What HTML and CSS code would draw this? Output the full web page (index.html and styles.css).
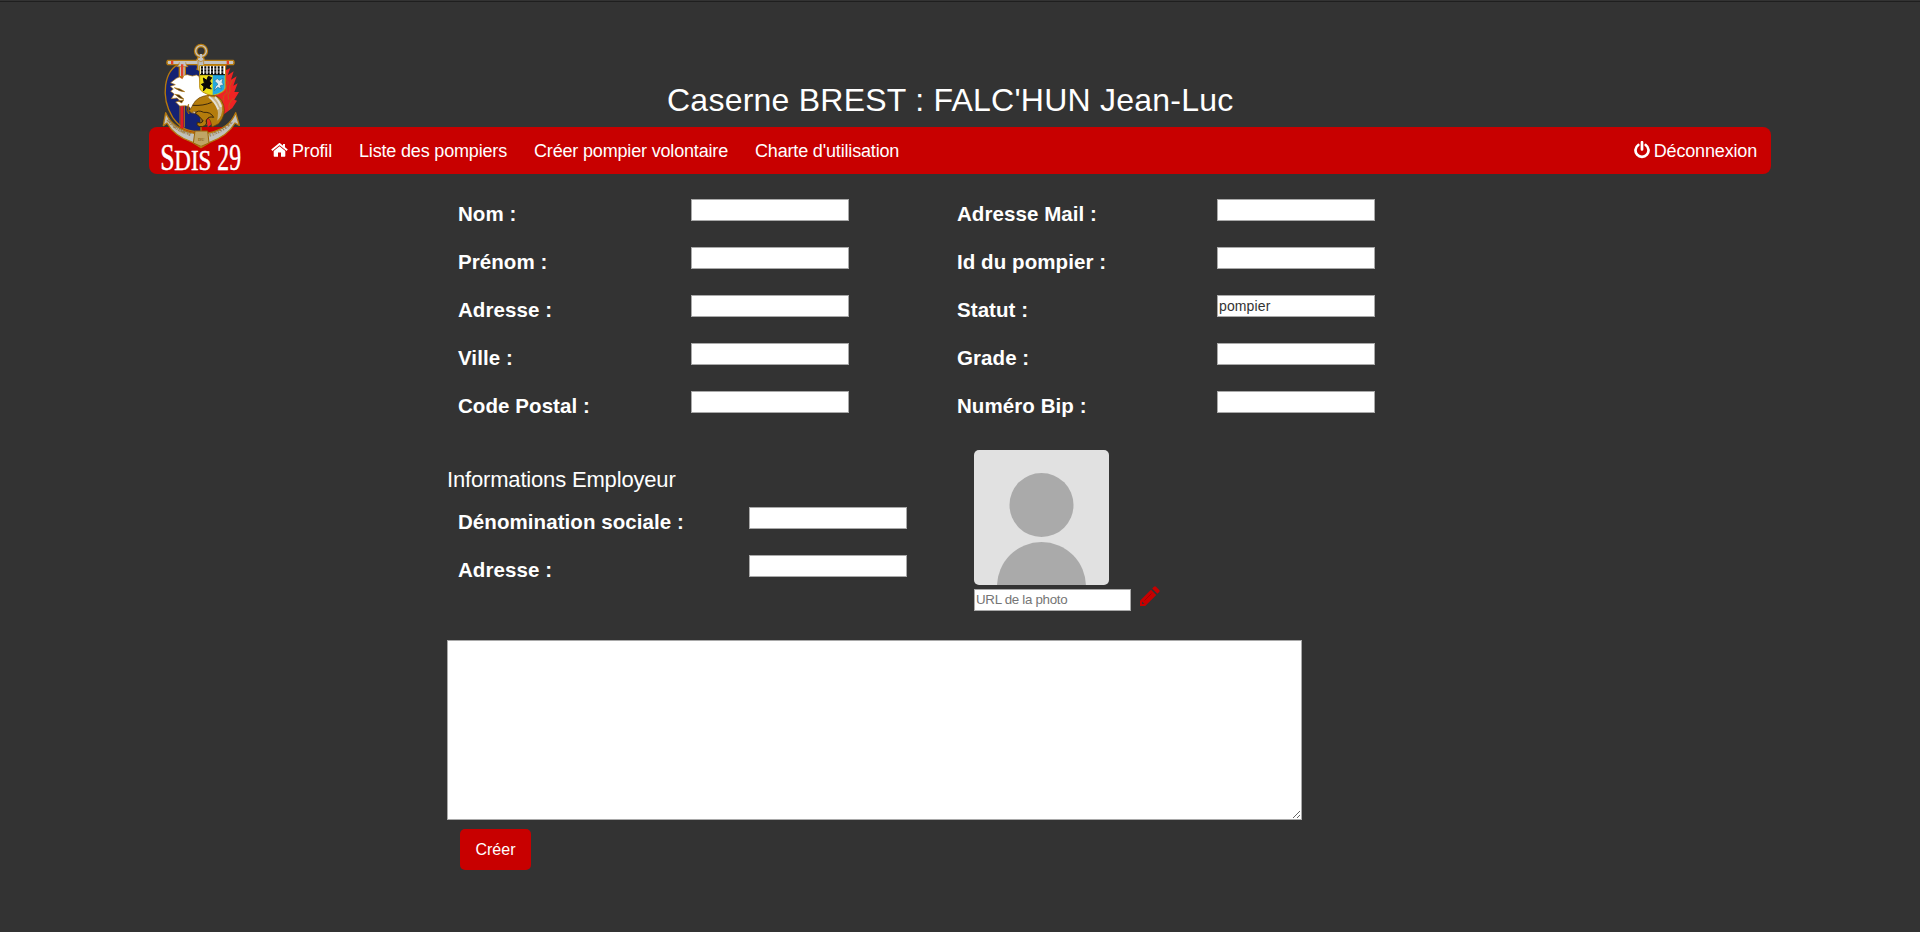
FILE: index.html
```html
<!DOCTYPE html>
<html lang="fr">
<head>
<meta charset="utf-8">
<title>SDIS 29</title>
<link rel="stylesheet" href="styles.css">
</head>
<body>
<header class="header">
  <h1 class="title">Caserne BREST : FALC'HUN Jean-Luc</h1>
  <nav class="nav">
    <svg class="logo" viewBox="60 39 243 390" role="img" aria-label="SDIS 29">
      <g stroke-linejoin="round">
        <path d="M121 100C72 120 60 200 98 262C125 300 145 304 183 306L183 100Z" fill="#142273" stroke="#b5790d" stroke-width="4"/>
        <path d="M120 112v180M133 112v180" stroke="#b5790d" stroke-width="3"/>
        <path d="M126 106v188" stroke="#e21b22" stroke-width="9"/>
        <path d="M184 105l10-11 5 10 12-11 5 12 12-9 5 11 12-13 3 14 12-7-3 20 14-7-8 22 18-12-8 25 17-10-10 28 13-7-10 26 14 0-14 23 8 3-14 22-24 18-50 40Z" fill="#ee2323"/>
        <path d="M259 130q-7 22 7 27q-13 15-4 32q-16 5-11 25M277 150q-12 18-7 34q-10 12-4 25M246 207q-8 17 4 27M280 205q-18 16-12 35M200 285l9-19 6 12 16-22" fill="none" stroke="#c15a16" stroke-width="3"/>
        <path d="M83 91q-5 7 0 13h35v36h18v-36h35q5 9 0 14q12-4 23 0q-5-7 0-14h86q5-6 0-13h-84q-5 0-6-15h-16q0 15-7 15Z" fill="#c3c3c3" stroke="#b5790d" stroke-width="4"/>
        <path d="M118 97q0 9-8 13h34q-7-4-7-13" fill="#c4c4c4" stroke="#b5790d" stroke-width="2"/>
        <path d="M93 92h7v11h-7ZM260 92h7v11h-7ZM123 103h7v35h-7Z" fill="#e2422b"/>
        <path d="M174 91q9 8 17 0v30h-17Z" fill="#bdbdbd" stroke="#b5790d" stroke-width="2"/>
        <circle cx="183" cy="63" r="16" fill="none" stroke="#b5790d" stroke-width="11"/>
        <circle cx="183" cy="63" r="16" fill="none" stroke="#c3c3c3" stroke-width="4"/>
        <path d="M180 72h6v18h-6Z" fill="#c3c3c3"/>
        <path d="M92 158l17-13 9-4 9 5 5-10 10-2 15 4 12-3 8 4 4 20 15 18 8 18-13 20-20 12-5 23-12-2-4-16-13-5-18 1-12-12 14-3-10-9-17 2 9-14-11-8 8-7-9-8 15-5Z" fill="#fff" stroke="#b5790d" stroke-width="2"/>
        <path d="M103 173l17 4 14 8q-16 0-31-12ZM105 193l13 2 14 13q-14-1-27-15ZM115 213l16-3-6 9ZM146 222q-12 18 1 30l-2-15Z" fill="#3b2a10" stroke="#b5790d" stroke-width="2"/>
        <path d="M179 107h77v66q0 14-38 25q-39-11-39-25Z" fill="#eadc19" stroke="#bd8f16" stroke-width="3"/>
        <path d="M218 132h36v41q0 12-36 22Z" fill="#23a9df"/>
        <path d="M181 108h74v26h-74Z" fill="#fff"/>
        <path d="M186 109v25M196 109v25M206 109v25M216 109v25M226 109v25M236 109v25M247 109v25" stroke="#050505" stroke-width="6" stroke-dasharray="7 2"/>
        <path d="M190 144l10 7 5-12 10 4-6 10 5 8-7 7 7 9-15-4-9 10 2-13-8-7 9-3ZM180 134h75" fill="#090909" stroke="#090909" stroke-width="3"/>
        <path d="M224 153l8-8 5 6 12-6-3 12 5 7-10 3 3 10-11-5-10 10 4-13 7-6Z" fill="#dce9ef" stroke="#1e6c91" stroke-width="2"/>
        <path d="M158 225q14-28 50-29q34-4 43 30q8 30-15 55l-20 10q-2-22-16-32l-21-10q-13-8-25-1l-8-6q8-4 12-17Z" fill="#b47c0c" stroke="#664008" stroke-width="2"/>
        <path d="M197 198q20 8 32 31q6 17 1 46q21-14 18-49q-8-31-51-28Z" fill="#c9b486" stroke="#b47c0c" stroke-width="3"/>
        <path d="M207 200q20 16 28 38M225 201q11 10 18 30" stroke="#e4e0d4" stroke-width="6" fill="none"/>
        <path d="M166 250q7-12 25-3q21-2 30 15q-17-5-23 11q6 12-11 17q-20 1-15-13q14 5 17-5q-11-14-23-22ZM158 226q33 2 57-9" fill="#b47c0c" stroke="#3a270b" stroke-width="3"/>
        <path d="M77 248q21 48 83 61q22 7 45 0q63-13 82-61l11 38l-13-7q-22 39-76 58l-26 16l-25-16q-55-18-77-58l-11 8Z" fill="#c2c2bc" stroke="#b5790d" stroke-width="4"/>
        <path d="M165 303h38l4 36-24 10-23-10Z" fill="#c0a565" stroke="#9b6408" stroke-width="3"/>
        <path id="ribbonLeft" d="M80 271Q108 308 160 320" fill="none"/>
        <path id="ribbonRight" d="M209 320Q259 306 284 269" fill="none"/>
      </g>
      <g class="ribbon-text">
        <text><textPath href="#ribbonLeft" textLength="88">DEPARTEMENT</textPath></text>
        <text><textPath href="#ribbonRight" textLength="83">FINISTERE</textPath></text>
        <text x="174" y="332">DU</text>
      </g>
      <g class="logo-name">
        <text x="61" y="420" font-size="116" textLength="43" lengthAdjust="spacingAndGlyphs">S</text>
        <text x="103" y="420" font-size="91" textLength="111" lengthAdjust="spacingAndGlyphs">DIS</text>
        <text x="232" y="420" font-size="116" textLength="71" lengthAdjust="spacingAndGlyphs">29</text>
      </g>
    </svg>
    <a class="nav-link"><svg class="icon-home" viewBox="0 0 17 14"><path d="M8.5 3.300 14.300 8V13a.7.7 0 0 1-.7.700H10V9.500H7v4.200H3.400A.7.7 0 0 1 2.700 13V8Z"/><path d="M.8 7.200 8.500 1 16.200 7.200M13 1v4" fill="none" stroke="#fff" stroke-width="1.900"/></svg>Profil</a>
    <a class="nav-link">Liste des pompiers</a>
    <a class="nav-link">Créer pompier volontaire</a>
    <a class="nav-link">Charte d'utilisation</a>
    <a class="nav-link logout"><svg class="icon-power" viewBox="0 0 16 18"><path d="M4.300 4A6.500 6.500 0 1 0 11.700 4M8 1.200v7.300" fill="none" stroke="#fff" stroke-width="2.700" stroke-linecap="round"/></svg>Déconnexion</a>
  </nav>
</header>
<main class="content">
  <form class="form">
    <div class="columns">
      <div class="fields identity">
        <label for="nom">Nom :</label><input id="nom">
        <label for="prenom">Prénom :</label><input id="prenom">
        <label for="adresse">Adresse :</label><input id="adresse">
        <label for="ville">Ville :</label><input id="ville">
        <label for="cp">Code Postal :</label><input id="cp">
      </div>
      <div class="fields service">
        <label for="mail">Adresse Mail :</label><input id="mail">
        <label for="pid">Id du pompier :</label><input id="pid">
        <label for="statut">Statut :</label><input id="statut" value="pompier">
        <label for="grade">Grade :</label><input id="grade">
        <label for="bip">Numéro Bip :</label><input id="bip">
      </div>
    </div>
    <div class="details">
      <section class="employer">
        <h2 class="subtitle">Informations Employeur</h2>
        <div class="fields company">
          <label for="denom">Dénomination sociale :</label><input id="denom">
          <label for="eadr">Adresse :</label><input id="eadr">
        </div>
      </section>
      <section class="photo">
        <svg class="avatar" viewBox="0 0 135 135"><rect width="135" height="135" fill="#e1e1e1"/><circle cx="67.500" cy="55" r="32" fill="#aaa"/><circle cx="67.500" cy="136.500" r="44.500" fill="#aaa"/></svg>
        <div class="photo-url">
          <input class="url" placeholder="URL de la photo">
          <svg class="icon-pencil" viewBox="0 0 20 20"><path d="M0 20V14.800L11 3.800 16.200 9 5.200 20ZM12.200 2.600 14 .8q1-.9 2 0L19.200 4q.9 1 0 2L17.400 7.800Z"/><path d="M2 15.500 4.500 18H2Z" fill="#333"/><path d="M4.500 14.500 11.500 7.500" stroke="#900" stroke-width=".8"/></svg>
        </div>
      </section>
    </div>
    <textarea class="notes" aria-label="Notes"></textarea>
    <button class="submit" type="button">Créer</button>
  </form>
</main>
</body>
</html>
```
FILE: styles.css
```css
* { box-sizing: border-box; }
body {
  margin: 0;
  height: 932px;
  overflow: hidden;
  background: #333;
  border-top: 1px solid #333;
  color: #fff;
  font-family: "Liberation Sans", Arial, sans-serif;
  box-shadow: inset 0 1px #1f1f1f;
}
.header { width: 1622px; margin: 0 auto; padding-top: 81px; }
.title {
  margin: 0 0 9px 518px;
  font-size: 32px;
  line-height: 36px;
  font-weight: 400;
  letter-spacing: .24px;
  white-space: nowrap;
}
.nav {
  position: relative;
  display: flex;
  align-items: center;
  gap: 27px;
  height: 47px;
  padding: 2px 14px 0 122px;
  background: #c80000;
  border-radius: 8px;
}
.logo { position: absolute; left: 11px; bottom: 1px; width: 81px; height: 130px; overflow: visible; }
.ribbon-text { font: bold 13px "Liberation Serif", serif; fill: #8d661b; }
.logo-name { font-family: "Liberation Serif", serif; fill: #fff; stroke: #fff; stroke-width: 1.500px; }
.nav-link { display: flex; align-items: center; font-size: 18px; line-height: 21px; letter-spacing: -.17px; white-space: nowrap; }
.logout { margin-left: auto; }
.icon-home { width: 17px; height: 14px; margin: -4px 4px 0 0; fill: #fff; }
.icon-power { width: 16px; height: 18px; margin: -4px 4px 0 0; }
.form { width: 940px; margin-left: 447px; padding-top: 25px; }
.columns { display: flex; padding-left: 11px; height: 251px; }
.fields { display: grid; grid-auto-rows: 48px; }
.fields label { padding-top: 3px; font-size: 20.500px; line-height: 24px; letter-spacing: .07px; font-weight: 700; white-space: nowrap; }
.identity { grid-template-columns: 233px 158px; width: 499px; }
.service { grid-template-columns: 260px 158px; }
.company { grid-template-columns: 291px 158px; padding-left: 11px; }
input {
  width: 158px;
  height: 22px;
  margin: 0;
  padding: 1px;
  border: 1px solid #a9a9a9;
  border-radius: 0;
  background: #fff;
  color: #333;
  font: 14px "Liberation Sans", Arial, sans-serif;
  letter-spacing: .12px;
}
.details { display: flex; height: 190px; }
.employer { width: 527px; padding-top: 17px; }
.subtitle { margin: 0; font-size: 22px; line-height: 26px; height: 40px; font-weight: 400; letter-spacing: -.17px; }
.avatar { display: block; width: 135px; height: 135px; border-radius: 5px; }
.photo-url { display: flex; margin-top: 4px; }
.url { width: 157px; padding: 0 1px 2px; font-size: 13.330px; letter-spacing: -.3px; }
.url::placeholder { color: #757575; opacity: 1; }
.icon-pencil { width: 20px; height: 20px; margin: -3px 0 0 9px; fill: #c80000; }
.notes {
  display: block;
  width: 855px;
  height: 180px;
  margin: 0;
  border: 1px solid #a9a9a9;
  border-radius: 0;
  background: #fff;
}
.submit {
  display: block;
  width: 71px;
  height: 41px;
  margin: 9px 0 0 13px;
  padding: 0;
  border: 0;
  border-radius: 5px;
  background: #c80000;
  color: #fff;
  font: 16px "Liberation Sans", Arial, sans-serif;
}
```
